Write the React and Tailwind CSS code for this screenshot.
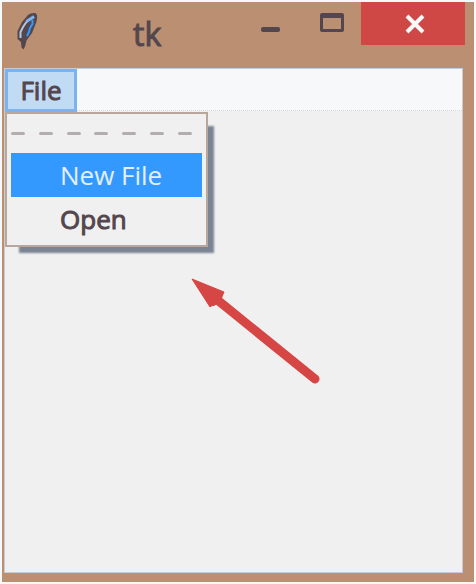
import React from "react";

const DASHES = [0, 1, 2, 3, 4, 5, 6];

function FeatherIcon() {
  return (
    <svg className="mt-2.5 ml-3 h-10 w-7 shrink-0" viewBox="0 0 28 40" aria-hidden="true">
      <path
        d="M14 3C16 1.500 20 .5 22 1.500C23.500 3 23.500 7 22 11L18 21L12.500 28.500L11 34.500L9.500 37.500L7.500 35.500L7 30L3.500 27V19L8 10z"
        fill="#53464c"
      />
      <path d="M20 5L13.500 8.500L9 15L6.500 20V26" fill="none" stroke="#b4c6dc" strokeWidth="2" />
      <path d="M20 4.500L12.500 9.500" fill="none" stroke="#7cb2ee" strokeWidth="3" />
      <path d="M18.500 8v4L16 16l-1 4-2 4" fill="none" stroke="#3399ff" strokeWidth="2" />
    </svg>
  );
}

function TitleBar() {
  return (
    <header className="flex h-[66px] items-start">
      <FeatherIcon />
      <h1 className="ml-[91px] flex-1 pt-2.5 text-[32px] leading-[44px] font-normal [-webkit-text-stroke:1px_#53464c]">
        tk
      </h1>
      <button aria-label="Minimize" className="flex h-[43px] w-[66px] justify-center pt-[25px]">
        <span className="h-[5px] w-[19px] rounded-xs bg-[#53464c]" />
      </button>
      <button aria-label="Maximize" className="flex h-[43px] w-[58px] justify-center pt-[11px]">
        <span className="h-[19px] w-6 rounded-xs border-3 border-t-5 border-[#53464c]" />
      </button>
      <button
        aria-label="Close"
        className="mr-[9px] flex h-[43px] w-[104px] items-center justify-center bg-[#d04845]"
      >
        <svg className="ml-1 h-5 w-5" viewBox="0 0 20 20" aria-hidden="true">
          <path d="M2 2l16 16M18 2L2 18" stroke="#f7f8fa" strokeWidth="4" />
        </svg>
      </button>
    </header>
  );
}

function FileMenu() {
  return (
    <div
      role="menu"
      aria-label="File"
      className="absolute top-full left-0 z-10 w-[203px] border-2 border-[#b9a79d] bg-[#f0f0f0] p-1 shadow-[10px_10px_2px_-4px_#7b8492]"
    >
      <button
        role="menuitem"
        aria-label="Tear off"
        className="flex h-[35px] w-full items-center justify-between pr-2.5 pb-1"
      >
        {DASHES.map((n) => (
          <span key={n} className="h-[3px] w-[14px] shrink-0 rounded-xs bg-[#b3adae]" />
        ))}
      </button>
      <button
        role="menuitem"
        className="block h-11 w-full bg-[#3399ff] pl-[49px] text-left text-[26px] leading-[44px] text-[#e4effb]"
      >
        New File
      </button>
      <button
        role="menuitem"
        className="block h-11 w-full pl-[49px] text-left text-[26px] leading-[44px] [-webkit-text-stroke:1px_#53464c]"
      >
        Open
      </button>
    </div>
  );
}

function Arrow() {
  return (
    <svg className="mt-[167px] ml-[186px] h-[108px] w-[130px]" viewBox="0 0 130 108" aria-hidden="true">
      <path d="M24 20L124 101" stroke="#d54644" strokeWidth="9" strokeLinecap="round" />
      <path d="M1 1L33 14l-3 7-6 6-4 1-1 1z" fill="#d54644" stroke="#d54644" strokeLinejoin="round" />
    </svg>
  );
}

export default function App() {
  return (
    <div className="flex min-h-screen bg-[#f7f8fa] p-0.5 font-['Open_Sans','Noto_Sans',sans-serif] text-[#53464c]">
      <div className="flex flex-1 flex-col bg-[#bb8f71] pb-[9px]">
        <TitleBar />
        <main className="mr-[11px] ml-0.5 flex-1 border border-[#c6cbd4] bg-[#f0f0f0]">
          <nav className="h-[42px] border-b border-dotted border-[#d5d8dd] bg-[#f7f8fa]">
            <div className="relative w-[72px]">
              <button className="block h-[43px] w-full border-3 border-[#7cb2ee] bg-[#c2dbf4] text-center text-[26px] leading-[37px] [-webkit-text-stroke:1px_#53464c]">
                File
              </button>
              <FileMenu />
            </div>
          </nav>
          <Arrow />
        </main>
      </div>
    </div>
  );
}
